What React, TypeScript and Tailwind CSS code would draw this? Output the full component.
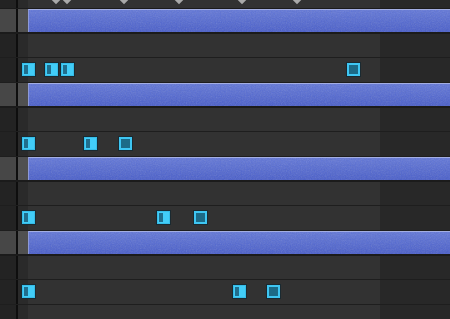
import React from "react";

type Key = { x: number; t: "f" | "h" };

const groups: Key[][] = [
  [
    { x: 22, t: "f" },
    { x: 45, t: "f" },
    { x: 61, t: "f" },
    { x: 347, t: "h" },
  ],
  [
    { x: 22, t: "f" },
    { x: 84, t: "f" },
    { x: 119, t: "h" },
  ],
  [
    { x: 22, t: "f" },
    { x: 157, t: "f" },
    { x: 194, t: "h" },
  ],
  [
    { x: 22, t: "f" },
    { x: 233, t: "f" },
    { x: 267, t: "h" },
  ],
];

const markers = [56, 67, 124, 179, 242, 297];

function Base({ children }: { children?: React.ReactNode }) {
  return (
    <>
      <div className="w-[16px] shrink-0 bg-[#232323]" />
      <div className="w-[2px] shrink-0 bg-[#0e0e0e]" />
      <div className="w-[10px] shrink-0 bg-[#2a2a2a]" />
      <div className="flex flex-1">
        <div className="w-[352px] shrink-0 bg-[#323232]" />
        <div className="flex-1 bg-[#282828]" />
      </div>
      {children}
    </>
  );
}

function KeyFrame({ k }: { k: Key }) {
  if (k.t === "f") {
    return (
      <div
        className="absolute top-[5px] flex h-[13px] w-[13px] border border-[#35bde9] bg-[#42cdf8] p-[1px] shadow-[0_0_0_1px_#1a2a31]"
        style={{ left: k.x }}
      >
        <div className="h-full w-[4px] bg-[#206e8d]" />
      </div>
    );
  }
  return (
    <div
      className="absolute top-[5px] h-[13px] w-[13px] border-2 border-[#3ec6f3] bg-[#1c6a87] shadow-[0_0_0_1px_#1a2a31]"
      style={{ left: k.x }}
    />
  );
}

function BarRow() {
  return (
    <div className="relative flex h-[25px] shrink-0 border-b-2 border-[#1b1b1b]">
      <div className="w-[16px] shrink-0 bg-[#474747]" />
      <div className="w-[2px] shrink-0 bg-[#0e0e0e]" />
      <div className="w-[10px] shrink-0 bg-[#505050]" />
      <div className="relative flex-1 overflow-hidden border-l border-t border-l-[#8d99d8] border-t-[#a3aee3] bg-linear-to-b from-[#6176d8] to-[#485dca]">
        <svg className="absolute inset-0 h-full w-full opacity-[0.22]" xmlns="http://www.w3.org/2000/svg">
          <filter id="n">
            <feTurbulence type="fractalNoise" baseFrequency="0.8" numOctaves="2" stitchTiles="stitch" />
            <feColorMatrix type="saturate" values="0" />
          </filter>
          <rect width="100%" height="100%" filter="url(#n)" />
        </svg>
      </div>
    </div>
  );
}

function EmptyRow() {
  return (
    <div className="relative flex h-[24px] shrink-0 border-b border-[#1e1e1e]">
      <Base />
    </div>
  );
}

function KeyRow({ keys }: { keys: Key[] }) {
  return (
    <div className="relative flex h-[25px] shrink-0 border-b border-[#1e1e1e]">
      <Base>
        {keys.map((k, i) => (
          <KeyFrame key={i} k={k} />
        ))}
      </Base>
    </div>
  );
}

export default function App() {
  return (
    <div className="flex h-[319px] w-[450px] flex-col overflow-hidden bg-[#1e1e1e]">
      <div className="relative flex h-[9px] shrink-0 border-b border-[#1b1b1b]">
        <Base>
          {markers.map((x) => (
            <div
              key={x}
              className="absolute top-[-3px] h-[6px] w-[6px] rotate-45 bg-[#a9a9a9]"
              style={{ left: x - 3 }}
            />
          ))}
        </Base>
      </div>
      {groups.map((g, i) => (
        <React.Fragment key={i}>
          <BarRow />
          <EmptyRow />
          <KeyRow keys={g} />
        </React.Fragment>
      ))}
      <div className="relative flex flex-1 shrink-0">
        <Base />
      </div>
    </div>
  );
}
